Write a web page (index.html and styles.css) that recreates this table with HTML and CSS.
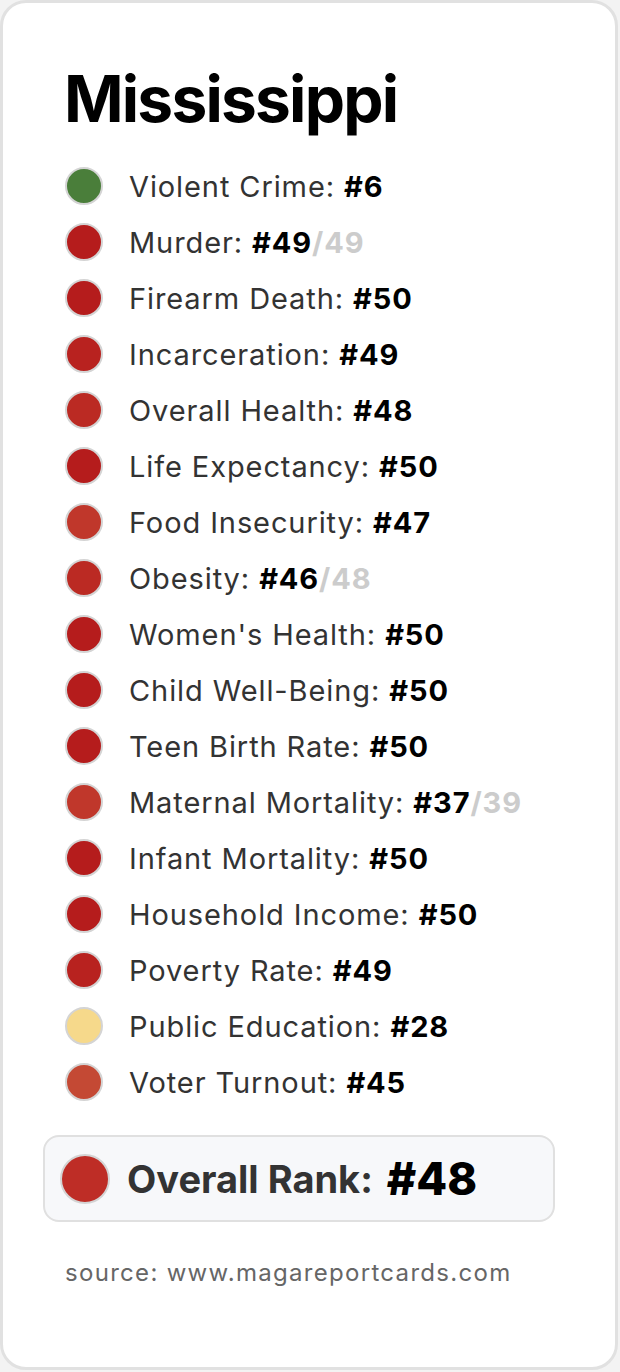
FILE: index.html
```html
<!DOCTYPE html>
<html lang="en">
<head>
<meta charset="utf-8">
<title>Mississippi</title>
<link rel="stylesheet" href="styles.css">
</head>
<body>
<div class="card">
  <h1 class="title">Mississippi</h1>
  <ul class="list">
    <li class="row"><span class="dot c-green"></span><span class="label">Violent Crime: <b class="rank">#6</b></span></li>
    <li class="row"><span class="dot c-50"></span><span class="label">Murder: <b class="rank">#49</b><b class="total">/49</b></span></li>
    <li class="row"><span class="dot c-50"></span><span class="label">Firearm Death: <b class="rank">#50</b></span></li>
    <li class="row"><span class="dot c-49"></span><span class="label">Incarceration: <b class="rank">#49</b></span></li>
    <li class="row"><span class="dot c-48"></span><span class="label">Overall Health: <b class="rank">#48</b></span></li>
    <li class="row"><span class="dot c-50"></span><span class="label">Life Expectancy: <b class="rank">#50</b></span></li>
    <li class="row"><span class="dot c-47"></span><span class="label">Food Insecurity: <b class="rank">#47</b></span></li>
    <li class="row"><span class="dot c-48"></span><span class="label">Obesity: <b class="rank">#46</b><b class="total">/48</b></span></li>
    <li class="row"><span class="dot c-50"></span><span class="label">Women's Health: <b class="rank">#50</b></span></li>
    <li class="row"><span class="dot c-50"></span><span class="label">Child Well-Being: <b class="rank">#50</b></span></li>
    <li class="row"><span class="dot c-50"></span><span class="label">Teen Birth Rate: <b class="rank">#50</b></span></li>
    <li class="row"><span class="dot c-47"></span><span class="label">Maternal Mortality: <b class="rank">#37</b><b class="total">/39</b></span></li>
    <li class="row"><span class="dot c-50"></span><span class="label">Infant Mortality: <b class="rank">#50</b></span></li>
    <li class="row"><span class="dot c-50"></span><span class="label">Household Income: <b class="rank">#50</b></span></li>
    <li class="row"><span class="dot c-49"></span><span class="label">Poverty Rate: <b class="rank">#49</b></span></li>
    <li class="row"><span class="dot c-yellow"></span><span class="label">Public Education: <b class="rank">#28</b></span></li>
    <li class="row"><span class="dot c-45"></span><span class="label">Voter Turnout: <b class="rank">#45</b></span></li>
  </ul>
  <div class="overall">
    <span class="dot dot-lg c-overall"></span>
    <span class="overall-label">Overall Rank:</span>
    <span class="overall-rank">#48</span>
  </div>
  <p class="source">source: www.magareportcards.com</p>
</div>
</body>
</html>
```

FILE: styles.css
```css
html, body {
  margin: 0;
  padding: 0;
  background: #f3f3f3;
}
body {
  font-family: Inter, "Noto Sans", "Liberation Sans", sans-serif;
  width: 620px;
  height: 1372px;
}
.card {
  box-sizing: border-box;
  width: 618px;
  height: 1370px;
  background: #fff;
  border: 3px solid #e1e1e1;
  border-radius: 26px;
  padding: 57px 62px 0 62px;
}
.title {
  margin: 0 0 21px -1px;
  font-size: 64px;
  line-height: 77px;
  font-weight: 700;
  color: #000;
  letter-spacing: -1.8px;
}
.list {
  list-style: none;
  margin: 0;
  padding: 0;
}
.row {
  display: flex;
  align-items: center;
  height: 56px;
  gap: 26px;
}
.dot {
  box-sizing: border-box;
  flex: none;
  width: 38px;
  height: 38px;
  border-radius: 50%;
  border: 2px solid #d4d4d4;
}
.label {
  font-size: 29px;
  line-height: 56px;
  color: #333;
  font-weight: 400;
  letter-spacing: 0.9px;
  padding-top: 2px;
}
.rank {
  font-weight: 700;
  color: #000;
}
.total {
  font-weight: 700;
  color: #cccccc;
}
.c-green { background: #4a7e3a; }
.c-50 { background: #b51c1c; }
.c-49 { background: #b8221f; }
.c-48 { background: #bb2a23; }
.c-47 { background: #c0372b; }
.c-45 { background: #c44934; }
.c-yellow { background: #f6d98b; }
.c-overall { background: #be2d26; }

.overall {
  box-sizing: border-box;
  display: flex;
  align-items: center;
  height: 87px;
  margin: 25px -2px 0 -22px;
  padding: 0 15px;
  background: #f7f8fa;
  border: 2px solid #e0e0e0;
  border-radius: 16px;
}
.dot-lg {
  width: 50px;
  height: 50px;
  margin-right: 17px;
}
.overall-label {
  font-size: 38px;
  font-weight: 700;
  color: #333;
  margin-right: 14px;
}
.overall-rank {
  font-size: 45px;
  font-weight: 800;
  color: #000;
}
.source {
  margin: 33px 0 0 0;
  font-size: 24px;
  line-height: 36px;
  color: #666;
  letter-spacing: 1.3px;
}
```
